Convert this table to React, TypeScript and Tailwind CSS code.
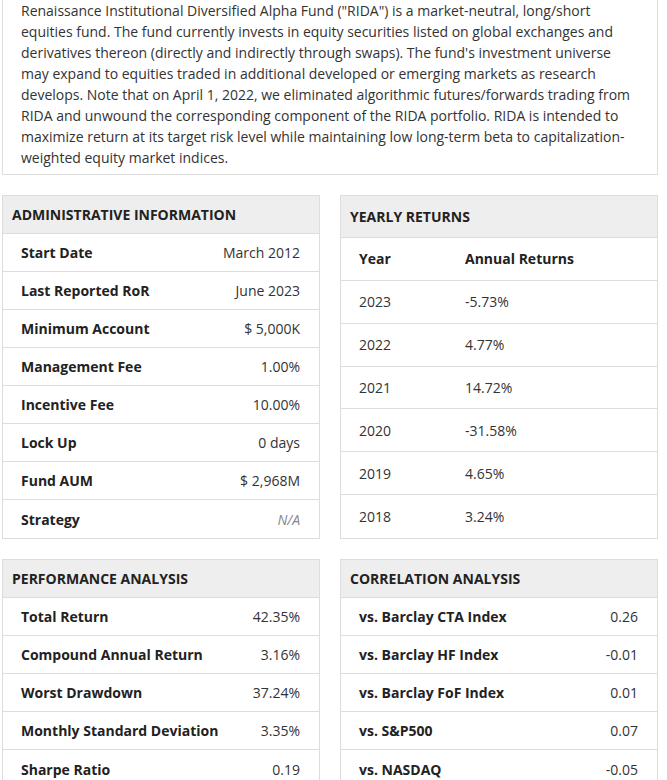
import React from 'react';

interface Row {
  label: string;
  value: string;
  muted?: boolean;
}

const adminRows: Row[] = [
  { label: 'Start Date', value: 'March 2012' },
  { label: 'Last Reported RoR', value: 'June 2023' },
  { label: 'Minimum Account', value: '$ 5,000K' },
  { label: 'Management Fee', value: '1.00%' },
  { label: 'Incentive Fee', value: '10.00%' },
  { label: 'Lock Up', value: '0 days' },
  { label: 'Fund AUM', value: '$ 2,968M' },
  { label: 'Strategy', value: 'N/A', muted: true },
];

const yearly = [
  { year: '2023', ret: '-5.73%' },
  { year: '2022', ret: '4.77%' },
  { year: '2021', ret: '14.72%' },
  { year: '2020', ret: '-31.58%' },
  { year: '2019', ret: '4.65%' },
  { year: '2018', ret: '3.24%' },
];

const perfRows: Row[] = [
  { label: 'Total Return', value: '42.35%' },
  { label: 'Compound Annual Return', value: '3.16%' },
  { label: 'Worst Drawdown', value: '37.24%' },
  { label: 'Monthly Standard Deviation', value: '3.35%' },
  { label: 'Sharpe Ratio', value: '0.19' },
];

const corrRows: Row[] = [
  { label: 'vs. Barclay CTA Index', value: '0.26' },
  { label: 'vs. Barclay HF Index', value: '-0.01' },
  { label: 'vs. Barclay FoF Index', value: '0.01' },
  { label: 'vs. S&P500', value: '0.07' },
  { label: 'vs. NASDAQ', value: '-0.05' },
];

// line ends as the fund page wraps them
const description = [
  'Renaissance Institutional Diversified Alpha Fund ("RIDA") is a market-neutral, long/short',
  'equities fund. The fund currently invests in equity securities listed on global exchanges and',
  "derivatives thereon (directly and indirectly through swaps). The fund's investment universe",
  'may expand to equities traded in additional developed or emerging markets as research',
  'develops. Note that on April 1, 2022, we eliminated algorithmic futures/forwards trading from',
  'RIDA and unwound the corresponding component of the RIDA portfolio. RIDA is intended to',
  'maximize return at its target risk level while maintaining low long-term beta to capitalization-',
  'weighted equity market indices.',
];

const PanelHeader: React.FC<{ title: string; tall?: boolean }> = ({ title, tall }) => (
  <div
    className={`flex items-center bg-[#eeeeee] border-b border-[#dddddd] px-[9px] text-[14px] font-bold text-[#222222] ${
      tall ? 'h-[42px]' : 'h-[38px]'
    }`}
  >
    {title}
  </div>
);

const InfoPanel: React.FC<{ title: string; rows: Row[] }> = ({ title, rows }) => (
  <div className="border border-[#dddddd] bg-white">
    <PanelHeader title={title} />
    {rows.map((row, i) => (
      <div
        key={row.label}
        className={`flex h-[38px] items-center justify-between pl-[18px] pr-[19px] ${
          i < rows.length - 1 ? 'border-b border-[#dddddd]' : ''
        }`}
      >
        <span className="font-bold text-[#222222]">{row.label}</span>
        <span className={row.muted ? 'italic text-[#888888]' : 'text-[#333333]'}>{row.value}</span>
      </div>
    ))}
  </div>
);

const YearlyPanel: React.FC = () => (
  <div className="flex flex-col border border-[#dddddd] bg-white">
    <PanelHeader title="YEARLY RETURNS" tall />
    <div className="grid flex-1 grid-cols-[124px_1fr] grid-rows-7">
      <div className="flex items-center border-b border-[#dddddd] pl-[18px] font-bold text-[#222222]">Year</div>
      <div className="flex items-center border-b border-[#dddddd] font-bold text-[#222222]">Annual Returns</div>
      {yearly.map((y, i) => (
        <React.Fragment key={y.year}>
          <div
            className={`flex items-center pl-[18px] ${i < yearly.length - 1 ? 'border-b border-[#dddddd]' : ''}`}
          >
            {y.year}
          </div>
          <div className={`flex items-center ${i < yearly.length - 1 ? 'border-b border-[#dddddd]' : ''}`}>
            {y.ret}
          </div>
        </React.Fragment>
      ))}
    </div>
  </div>
);

export default function App() {
  return (
    <div
      className="min-h-[780px] bg-white text-[14px] text-[#333333]"
      style={{ fontFamily: '"Open Sans", "Liberation Sans", Arial, sans-serif' }}
    >
      <div className="-mt-[11px] ml-[2px] w-[656px]">
        <div className="border border-[#dddddd] pl-[18px] pr-[10px] pt-[10px] pb-[6px] leading-[21px]">
          {description.map((line, i) => (
            <div key={i} className="whitespace-nowrap">
              {line}
            </div>
          ))}
        </div>

        <div className="mt-[20px] grid grid-cols-2 gap-x-[20px] gap-y-[20px]">
          <InfoPanel title="ADMINISTRATIVE INFORMATION" rows={adminRows} />
          <YearlyPanel />
          <InfoPanel title="PERFORMANCE ANALYSIS" rows={perfRows} />
          <InfoPanel title="CORRELATION ANALYSIS" rows={corrRows} />
        </div>
      </div>
    </div>
  );
}
